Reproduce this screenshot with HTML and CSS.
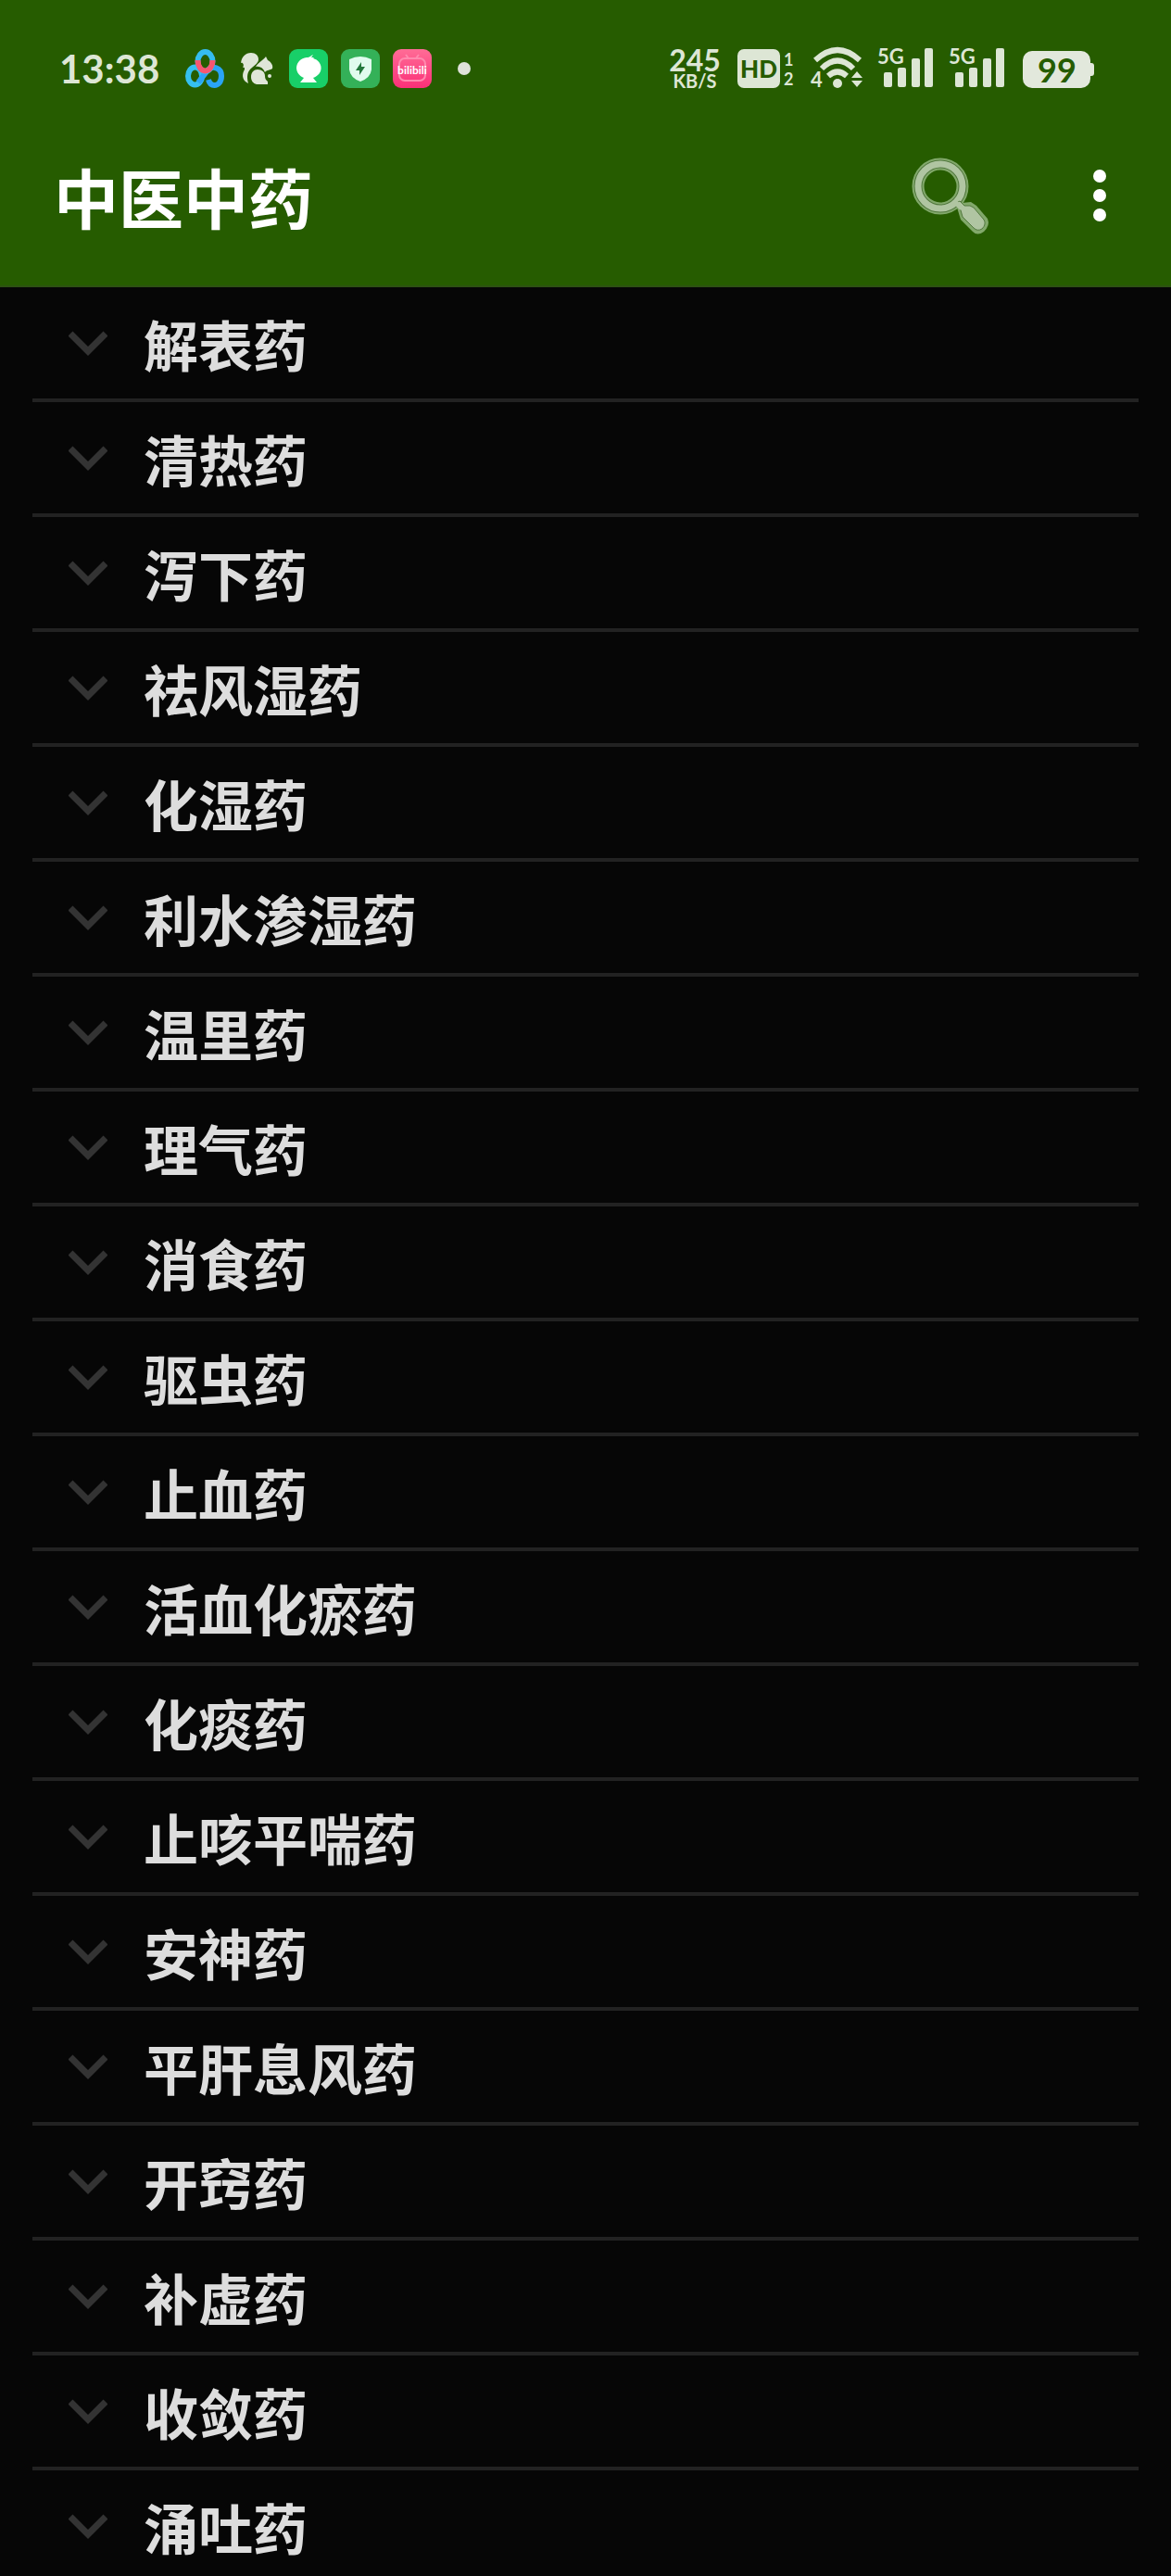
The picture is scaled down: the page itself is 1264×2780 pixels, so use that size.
FILE: index.html
```html
<!DOCTYPE html>
<html lang="zh-CN">
<head>
    <meta charset="UTF-8">
    <meta name="viewport" content="width=device-width, initial-scale=1">
    <title>中医中药</title>
    <link rel="stylesheet" href="styles.css">
</head>
<body>
<header class="header">
    <div class="status">
        <span class="clock">13:38</span>
        <div class="notifications">
            <!-- cloud drive -->
            <svg width="42" height="42" viewBox="0 0 42 42" fill="none" stroke-width="6">
                <ellipse cx="10.500" cy="29" rx="7.500" ry="9.500" stroke="#35c0f0"/>
                <path d="M14 36 L24 23 C29 17 39 20 39 29 C39 36 35 39 31.500 39 C28 39 26 37 25 33" stroke="#2aa4f5"/>
                <ellipse cx="21.500" cy="13.500" rx="8" ry="10.500" stroke="#35bdf0"/>
                <path d="M13.500 12 A8 11.500 0 0 0 29.500 12" stroke="#f75670"/>
            </svg>
            <!-- squirrel -->
            <svg width="42" height="42" viewBox="0 0 42 42" fill="#dfe6d8">
                <path d="M4 15 C5 8 9 4 15 4 C20 4 23 7 23 11 C23 15 19 17 16 20 C11 24 10 29 12 37 C6 34 5 29 7 24 C9 21 8 19 6 20 C8 17 6 14 4 15Z"/>
                <path d="M20 19 C23 14 28 12 31 8 L33 12 C37 14 39 18 38 21 C36 23 32 22 30 25 C28 20 24 18 20 19Z"/>
                <path d="M15 30 C15 25 18 22 22 22 C27 22 30 25 30 29 C30 32 31 33 33 35 L33 38 H21 C17 37 15 34 15 30Z"/>
                <circle cx="35" cy="29" r="2"/>
            </svg>
            <svg width="42" height="42" viewBox="0 0 42 42">
                <rect width="42" height="42" rx="9" fill="#18cf68"/>
                <path d="M16 31 C4 26 6 11 19 9 C23 9 23 7 26 6 L24 9 H27 L26 10 C37 13 38 27 26 31 L30 36 H12Z" fill="#fff"/>
            </svg>
            <svg width="42" height="42" viewBox="0 0 42 42">
                <rect width="42" height="42" rx="9" fill="#34b158"/>
                <path d="M9 11 Q21 5 33 11 V22 Q32 31 21 35 Q10 31 9 22Z" fill="#e0fbee"/>
                <path d="M22 14 L16 23 H20 V28 L26 19 H22Z" fill="#23783c"/>
            </svg>
            <svg width="42" height="42" viewBox="0 0 42 42">
                <defs>
                    <linearGradient id="pink" x2="0" y2="1">
                        <stop offset="0" stop-color="#ff6c96"/>
                        <stop offset="1" stop-color="#fb3078"/>
                    </linearGradient>
                </defs>
                <rect width="42" height="42" rx="9" fill="url(#pink)"/>
                <path d="M14 6 L17 10 M28 6 L25 10" stroke="#ff8aae" stroke-width="2"/>
                <rect x="7" y="10" width="28" height="24" rx="6" fill="none" stroke="#ff8aae" stroke-width="2"/>
                <text class="tv-text" x="21" y="27" text-anchor="middle">bilibili</text>
            </svg>
            <svg width="42" height="42" viewBox="0 0 42 42">
                <circle cx="21" cy="21" r="7" fill="#dfe2da"/>
            </svg>
        </div>
        <div class="system">
            <div class="speed">
                <span class="speed-value">245</span>
                <span class="speed-unit">KB/S</span>
            </div>
            <svg width="64" height="46" viewBox="0 0 64 46" fill="#dde6d5">
                <rect x="1" y="2" width="46" height="42" rx="7"/>
                <text class="hd-text" x="24" y="33" text-anchor="middle">HD</text>
                <text class="sim-text" x="51" y="20">1</text>
                <text class="sim-text" x="51" y="41">2</text>
            </svg>
            <svg width="56" height="46" viewBox="0 0 56 46" fill="#dde6d5">
                <g fill="none" stroke="#dde6d5" stroke-width="6">
                    <path d="M5 14 Q29 -8 53 14"/>
                    <path d="M12 23 Q29 6 46 23"/>
                    <path d="M19 31 Q29 22 39 31"/>
                </g>
                <circle cx="29" cy="39" r="5"/>
                <path d="M44 33 L50 26 L56 33Z M44 36 L50 43 L56 36Z"/>
                <text class="wifi-text" x="0" y="43">4</text>
            </svg>
            <svg width="61" height="46" viewBox="0 0 61 46" fill="#dde6d5">
                <text class="net-text" x="0" y="18">5G</text>
                <rect x="7" y="27" width="9" height="16" rx="2"/>
                <rect x="22" y="22" width="9" height="21" rx="2"/>
                <rect x="37" y="12" width="9" height="31" rx="2"/>
                <rect x="51" y="1" width="9" height="42" rx="2"/>
            </svg>
            <svg width="61" height="46" viewBox="0 0 61 46" fill="#dde6d5">
                <text class="net-text" x="0" y="18">5G</text>
                <rect x="7" y="27" width="9" height="16" rx="2"/>
                <rect x="22" y="22" width="9" height="21" rx="2"/>
                <rect x="37" y="12" width="9" height="31" rx="2"/>
                <rect x="51" y="1" width="9" height="42" rx="2"/>
            </svg>
            <svg width="80" height="46" viewBox="0 0 80 46" fill="#e2e8dc">
                <rect x="3" y="4" width="73" height="40" rx="10"/>
                <rect x="72" y="17" width="8" height="14" rx="3"/>
                <text class="battery-text" x="40" y="38" text-anchor="middle">99</text>
            </svg>
        </div>
    </div>
    <div class="toolbar">
        <h1 class="title">中医中药</h1>
        <button class="tool" aria-label="搜索">
            <svg width="84" height="84" viewBox="0 0 84 84">
                <circle cx="31" cy="32" r="24" fill="none" stroke="#82a96b" stroke-width="13"/>
                <path d="M49 55 L54 50 L64 49 L70 53 L82 67 Q85 74 78 81 Q71 86 66 81 L53 68Z" fill="#82a96b"/>
                <circle cx="31" cy="32" r="24" fill="none" stroke="#52783e" stroke-width="9"/>
                <circle cx="31" cy="32" r="24" fill="none" stroke="#b0c5a2" stroke-width="7"/>
                <path d="M48 50 L52 48 L57 53 H63 L67 55 L78 68 Q81 73 76 78 Q71 81 67 77 L55 65 L53 58Z" fill="#b0c5a2" stroke="#52783e"/>
                <path d="M46 48 L54 56" stroke="#b0c5a2" stroke-width="5"/>
            </svg>
        </button>
        <button class="tool" aria-label="更多">
            <svg width="42" height="84" viewBox="0 0 42 84" fill="#fff">
                <circle cx="21" cy="21" r="7"/>
                <circle cx="21" cy="42" r="7"/>
                <circle cx="21" cy="63" r="7"/>
            </svg>
        </button>
    </div>
</header>
<svg class="hide">
    <symbol id="chevron" viewBox="0 0 42 28">
        <path d="M2 3 L21 22 L40 3" fill="none" stroke="#333" stroke-width="7"/>
    </symbol>
</svg>
<ul class="list">
    <li class="item"><button class="item-button"><svg class="chevron"><use href="#chevron"/></svg>解表药</button></li>
    <li class="item"><button class="item-button"><svg class="chevron"><use href="#chevron"/></svg>清热药</button></li>
    <li class="item"><button class="item-button"><svg class="chevron"><use href="#chevron"/></svg>泻下药</button></li>
    <li class="item"><button class="item-button"><svg class="chevron"><use href="#chevron"/></svg>祛风湿药</button></li>
    <li class="item"><button class="item-button"><svg class="chevron"><use href="#chevron"/></svg>化湿药</button></li>
    <li class="item"><button class="item-button"><svg class="chevron"><use href="#chevron"/></svg>利水渗湿药</button></li>
    <li class="item"><button class="item-button"><svg class="chevron"><use href="#chevron"/></svg>温里药</button></li>
    <li class="item"><button class="item-button"><svg class="chevron"><use href="#chevron"/></svg>理气药</button></li>
    <li class="item"><button class="item-button"><svg class="chevron"><use href="#chevron"/></svg>消食药</button></li>
    <li class="item"><button class="item-button"><svg class="chevron"><use href="#chevron"/></svg>驱虫药</button></li>
    <li class="item"><button class="item-button"><svg class="chevron"><use href="#chevron"/></svg>止血药</button></li>
    <li class="item"><button class="item-button"><svg class="chevron"><use href="#chevron"/></svg>活血化瘀药</button></li>
    <li class="item"><button class="item-button"><svg class="chevron"><use href="#chevron"/></svg>化痰药</button></li>
    <li class="item"><button class="item-button"><svg class="chevron"><use href="#chevron"/></svg>止咳平喘药</button></li>
    <li class="item"><button class="item-button"><svg class="chevron"><use href="#chevron"/></svg>安神药</button></li>
    <li class="item"><button class="item-button"><svg class="chevron"><use href="#chevron"/></svg>平肝息风药</button></li>
    <li class="item"><button class="item-button"><svg class="chevron"><use href="#chevron"/></svg>开窍药</button></li>
    <li class="item"><button class="item-button"><svg class="chevron"><use href="#chevron"/></svg>补虚药</button></li>
    <li class="item"><button class="item-button"><svg class="chevron"><use href="#chevron"/></svg>收敛药</button></li>
    <li class="item"><button class="item-button"><svg class="chevron"><use href="#chevron"/></svg>涌吐药</button></li>
</ul>
</body>
</html>
```
FILE: styles.css
```css
* {
    box-sizing: border-box;
}

body {
    margin: 0;
    height: 100vh;
    display: flex;
    flex-direction: column;
    background: #060606;
    color: #ddd;
    font-family: "Noto Sans CJK SC", sans-serif;
}

button {
    border: 0;
    padding: 0;
    background: none;
    color: inherit;
    font: inherit;
}

svg {
    display: block;
    flex: none;
    overflow: visible;
}

.hide {
    display: none;
}

.header {
    flex: none;
    background: #265c00;
    border-bottom: 2px solid #2d5212;
}

/* status bar */
.status {
    display: flex;
    align-items: center;
    height: 114px;
    padding: 34px 83px 0 64px;
    color: #dde6d5;
    font-family: Lato, sans-serif;
    font-weight: 700;
}

.clock {
    width: 136px;
    font-size: 42px;
}

.notifications {
    display: flex;
    gap: 14px;
}

.system {
    display: flex;
    align-items: center;
    gap: 16px;
    margin-left: auto;
}

.speed {
    width: 58px;
    display: flex;
    flex-direction: column;
    align-items: center;
}

.speed-value {
    font-size: 32px;
    line-height: 26px;
}

.speed-unit {
    font-size: 20px;
    line-height: 18px;
}

.tv-text {
    fill: #fff;
    font-size: 12px;
}

.hd-text {
    fill: #265c00;
    font-size: 26px;
    font-weight: 900;
}

.sim-text {
    font-size: 18px;
}

.wifi-text {
    font-size: 22px;
}

.net-text {
    font-size: 22px;
}

.battery-text {
    fill: #265c00;
    font-size: 36px;
}

/* app bar */
.toolbar {
    display: flex;
    align-items: center;
    gap: 98px;
    height: 194px;
    padding: 0 56px 0 58px;
    color: #fff;
}

.title {
    flex: 1;
    margin: 0;
    font-size: 70px;
    font-weight: 700;
}

/* categories */
.list {
    flex: 1;
    min-height: 0;
    margin: 0;
    padding: 0 35px;
    list-style: none;
    overflow-y: auto;
    scrollbar-width: none;
}

.item {
    height: 124px;
    border-bottom: 4px solid #222;
}

.item-button {
    display: flex;
    align-items: center;
    gap: 39px;
    width: 100%;
    height: 120px;
    padding-left: 39px;
    font-size: 59px;
    font-weight: 700;
    text-align: left;
}

.chevron {
    width: 42px;
    height: 28px;
    margin-top: 2px;
}
```
